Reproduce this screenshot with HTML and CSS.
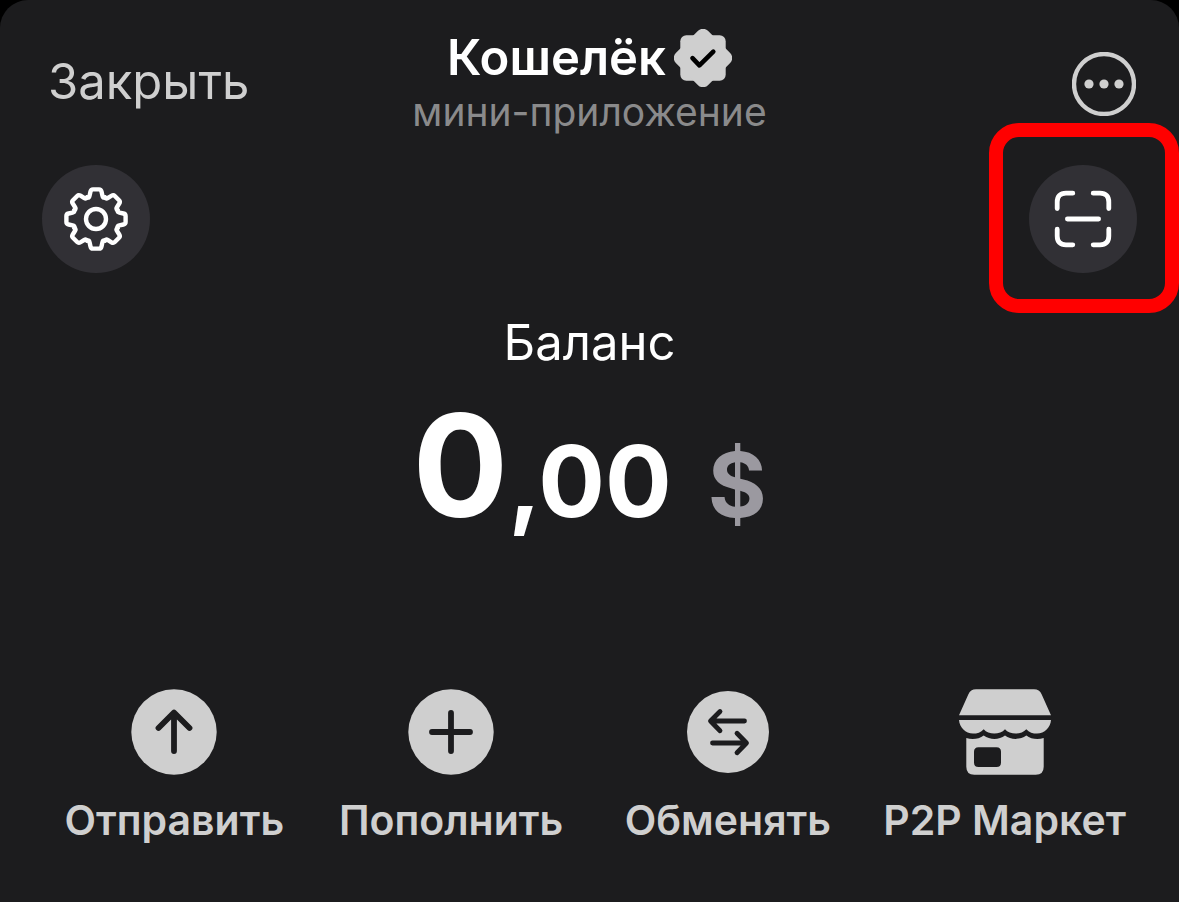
FILE: index.html
```html
<!DOCTYPE html>
<html lang="ru">
<head>
<meta charset="utf-8">
<meta name="viewport" content="width=device-width, initial-scale=1">
<title>Кошелёк</title>
<link rel="stylesheet" href="styles.css">
</head>
<body>
<main class="app">
  <header class="header">
    <button class="close" type="button">Закрыть</button>
    <div class="heading">
      <h1 class="title">Кошелёк
        <svg class="badge" viewBox="-29 -29 58 58" aria-hidden="true">
          <g fill="#cfcfcf">
            <rect x="-22.7" y="-22.7" width="45.4" height="45.4" rx="6"/>
            <rect x="-22.7" y="-22.7" width="45.4" height="45.4" rx="7" transform="rotate(45)"/>
          </g>
          <path d="M-10.5 .2L-3.6 7.4L10.3-6.400" fill="none" stroke="#000" stroke-width="4.6" stroke-linecap="round" stroke-linejoin="round"/>
        </svg>
      </h1>
      <p class="subtitle">мини-приложение</p>
    </div>
    <button class="more" type="button" aria-label="Ещё">
      <svg viewBox="-32 -32 64 64" aria-hidden="true">
        <circle r="30" fill="none" stroke="#cfcfcf" stroke-width="4.4"/>
        <g fill="#cfcfcf"><circle cx="-15" r="4.6"/><circle r="4.6"/><circle cx="15" r="4.6"/></g>
      </svg>
    </button>
  </header>

  <nav class="tools">
    <button class="tool" type="button" aria-label="Настройки">
      <svg viewBox="-54 -54 108 108" fill="none" stroke="#fff" stroke-width="4.4" stroke-linecap="round" stroke-linejoin="round" aria-hidden="true">
        <defs>
          <path id="tooth" d="M-9-21.6C-7.2-21-6.7-22-6.4-23.4L-5.5-27.4Q-5-29.6-3-29.6H3Q5-29.6 5.5-27.4L6.4-23.4C6.7-22 7.2-21 9-21.6"/>
        </defs>
        <use href="#tooth"/>
        <use href="#tooth" transform="rotate(45)"/>
        <use href="#tooth" transform="rotate(90)"/>
        <use href="#tooth" transform="rotate(135)"/>
        <use href="#tooth" transform="rotate(180)"/>
        <use href="#tooth" transform="rotate(225)"/>
        <use href="#tooth" transform="rotate(270)"/>
        <use href="#tooth" transform="rotate(315)"/>
        <circle r="10"/>
      </svg>
    </button>
    <button class="tool tool-marked" type="button" aria-label="Сканировать">
      <svg viewBox="-54 -54 108 108" fill="none" stroke="#fff" stroke-width="4.8" stroke-linecap="round" aria-hidden="true">
        <path d="M-25.8-10.5V-17Q-25.8-25.8-17-25.8H-10.2M10.2-25.8H17Q25.8-25.8 25.8-17V-10.5M25.8 10.2V17Q25.8 25.8 17 25.8H10.2M-10.2 25.8H-17Q-25.8 25.8-25.8 17V10.2M-15.6 0H15.6"/>
      </svg>
    </button>
  </nav>

  <section class="balance">
    <h2 class="balance-label">Баланс</h2>
    <p class="amount"><span class="whole">0</span><span class="cents">,00</span> <span class="currency">$</span></p>
  </section>

  <div class="actions">
    <button class="action" type="button">
      <svg class="icon" viewBox="-46 -43 92 86" aria-hidden="true">
        <circle r="42.7" fill="#cfcfcf"/>
        <path d="M0 19V-19M-15.5-4L0-19.5L15.5-4" fill="none" stroke="#1c1c1e" stroke-width="5.8" stroke-linecap="round" stroke-linejoin="round"/>
      </svg>
      Отправить
    </button>
    <button class="action" type="button">
      <svg class="icon" viewBox="-46 -43 92 86" aria-hidden="true">
        <circle r="42.7" fill="#cfcfcf"/>
        <path d="M0-19V19M-19 0H19" fill="none" stroke="#1c1c1e" stroke-width="5.8" stroke-linecap="round"/>
      </svg>
      Пополнить
    </button>
    <button class="action" type="button">
      <svg class="icon" viewBox="-46 -43 92 86" aria-hidden="true">
        <circle r="41" fill="#cfcfcf"/>
        <path d="M16.5-11H-16.5M-8-20.5L-17.5-11L-8-1.3M-15.5 11H17.5M9 1.3L18.5 11L9 20.7" fill="none" stroke="#1c1c1e" stroke-width="4.8" stroke-linecap="round" stroke-linejoin="round"/>
      </svg>
      Обменять
    </button>
    <button class="action" type="button">
      <svg class="icon" viewBox="0 0 92 86" aria-hidden="true">
        <g fill="#cfcfcf">
          <path d="M17 .3H75Q80.500 .3 82.600 5.300L92 26.300H0L9.400 5.300Q11.500 .3 17 .3Z"/>
          <path d="M0 31H92C91.500 38.500 85.500 44.600 78 44.600C74 44.600 70 43.500 67.300 40.200C62.500 46 51 46 46 40.200C41 46 29.500 46 24.700 40.200C22 43.500 18 44.600 14 44.600C6.500 44.600 .5 38.500 0 31Z"/>
          <path fill-rule="evenodd" d="M7.300 49C13 50.800 20 50.200 24.700 46.500C31 51 40 51 46 46.500C52 51 61 51 67.300 46.500C72 50.200 79 50.800 84.700 49V77.700Q84.700 85.700 76.700 85.700H15.300Q7.300 85.700 7.300 77.700ZM19.500 58.300Q15 58.300 15 62.800V73.500Q15 78 19.500 78H37.500Q42 78 42 73.500V62.800Q42 58.300 37.500 58.300Z"/>
        </g>
      </svg>
      P2P Маркет
    </button>
  </div>
</main>
</body>
</html>
```
FILE: styles.css
```css
* {
  box-sizing: border-box;
}

body {
  margin: 0;
  background: #000;
  color: #fff;
  font-family: Inter, "Liberation Sans", sans-serif;
}

h1, h2, p {
  margin: 0;
}

button {
  padding: 0;
  border: 0;
  background: none;
  color: #cfcfcf;
  font: inherit;
  cursor: pointer;
}

svg {
  display: block;
}

.app {
  min-height: 100vh;
  padding-bottom: 57px;
  border-radius: 28px 28px 0 0;
  background: #1c1c1e;
  display: flex;
  flex-direction: column;
}

.header {
  display: grid;
  grid-template-columns: 1fr auto 1fr;
  align-items: center;
  padding: 28px 43px 0;
}

.close {
  justify-self: start;
  padding-left: 5px;
  font-size: 49px;
  line-height: 60px;
}

.heading {
  text-align: center;
}

.title {
  display: flex;
  justify-content: center;
  align-items: center;
  gap: 8px;
  font-size: 49px;
  font-weight: 600;
  line-height: 60px;
}

.badge {
  width: 58px;
  height: 58px;
}

.subtitle {
  color: #8a8a8b;
  font-size: 39px;
  line-height: 48px;
}

.more {
  justify-self: end;
  padding-top: 4px;
}

.more svg {
  width: 64px;
  height: 64px;
}

.tools {
  display: flex;
  justify-content: space-between;
  padding: 29px 42px 0;
}

.tool {
  position: relative;
  width: 108px;
  height: 108px;
  border-radius: 50%;
  background: #313035;
}

.tool-marked::after {
  content: "";
  position: absolute;
  inset: -42px -42px -40px -40px;
  border: 14px solid #f00;
  border-radius: 30px;
}

.balance {
  padding-top: 40px;
  text-align: center;
}

.balance-label {
  font-size: 49px;
  font-weight: 400;
  line-height: 60px;
}

.amount {
  font-weight: 700;
  line-height: 184px;
}

.whole {
  font-size: 142px;
}

.cents {
  font-size: 99px;
}

.currency {
  margin-left: 32px;
  color: #9b99a0;
  font-size: 90px;
}

.actions {
  display: grid;
  grid-template-columns: repeat(4, 1fr);
  margin-top: auto;
  padding: 0 36px;
}

.action {
  display: flex;
  flex-direction: column;
  align-items: center;
  gap: 20px;
  font-size: 41px;
  font-weight: 600;
  line-height: 50px;
  white-space: nowrap;
}

.icon {
  width: 92px;
  height: 86px;
}
```
